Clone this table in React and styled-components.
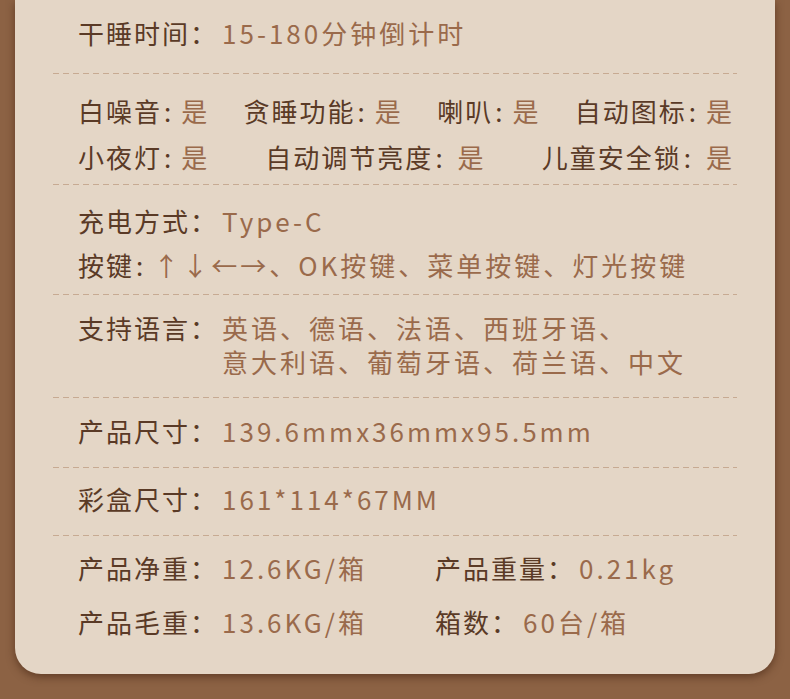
import React from 'react';
import styled, { createGlobalStyle } from 'styled-components';

const Global = createGlobalStyle`
  html, body { margin: 0; padding: 0; }
  body {
    background: #8c6244;
    font-family: "Noto Sans CJK SC", "Noto Sans", sans-serif;
  }
`;

const Page = styled.div`
  padding: 0 15px 25px;
`;

const Card = styled.div`
  background: #e4d6c6;
  border-radius: 0 0 26px 26px;
  box-shadow: 0 3px 9px rgba(60, 30, 12, 0.55);
`;

const Section = styled.div`
  padding: ${({ pt }) => pt}px 40px ${({ pb }) => pb}px 63px;
  display: flex;
  flex-direction: column;
  gap: ${({ gap }) => gap || 0}px;
`;

const Divider = styled.div`
  height: 1px;
  margin: 0 38px;
  background: repeating-linear-gradient(to right, #c7aa92 0 6px, transparent 6px 10px);
`;

const Row = styled.div`
  display: flex;
  align-items: flex-start;
  justify-content: ${({ spread }) => (spread ? 'space-between' : 'flex-start')};
  line-height: 34px;
  font-size: 26px;
  white-space: nowrap;
`;

const Item = styled.div`
  display: flex;
  align-items: flex-start;
`;

const Label = styled.span`
  color: #5a3a26;
  letter-spacing: 2px;
`;

const Colon = styled.span`
  color: #5a3a26;
  padding: ${({ wide }) => (wide ? '0 15px 0 2px' : '0 10px 0 2px')};
`;

const Value = styled.span`
  color: #9a6a4b;
  letter-spacing: 3px;
  margin-left: ${({ indent }) => indent || 0}px;
`;

const Lines = styled.div`
  display: flex;
  flex-direction: column;
`;

const Grid = styled.div`
  display: grid;
  grid-template-columns: 357px auto;
  row-gap: 20px;
`;

function Pair({ label, value, wide }) {
  return (
    <Item>
      <Label>{label}</Label>
      <Colon wide={wide}>:</Colon>
      <Value>{value}</Value>
    </Item>
  );
}

function Spec({ label, value }) {
  return (
    <Row>
      <Label>{label}：</Label>
      <Value indent={4}>{value}</Value>
    </Row>
  );
}

export default function App() {
  return (
    <>
      <Global />
      <Page>
        <Card>
          <Section pt={16} pb={23}>
            <Spec label="干睡时间" value="15-180分钟倒计时" />
          </Section>
          <Divider />

          <Section pt={20} pb={10} gap={12}>
            <Row spread>
              <Pair label="白噪音" value="是" />
              <Pair label="贪睡功能" value="是" />
              <Pair label="喇叭" value="是" />
              <Pair label="自动图标" value="是" />
            </Row>
            <Row spread>
              <Pair label="小夜灯" value="是" />
              <Pair label="自动调节亮度" value="是" wide />
              <Pair label="儿童安全锁" value="是" wide />
            </Row>
          </Section>
          <Divider />

          <Section pt={19} pb={12} gap={10}>
            <Spec label="充电方式" value="Type-C" />
            <Row>
              <Label>按键</Label>
              <Colon>:</Colon>
              <Value>↑↓←→、OK按键、菜单按键、灯光按键</Value>
            </Row>
          </Section>
          <Divider />

          <Section pt={16} pb={18}>
            <Row>
              <Label>支持语言：</Label>
              <Lines>
                <Value indent={4}>英语、德语、法语、西班牙语、</Value>
                <Value indent={4}>意大利语、葡萄牙语、荷兰语、中文</Value>
              </Lines>
            </Row>
          </Section>
          <Divider />

          <Section pt={16} pb={19}>
            <Spec label="产品尺寸" value="139.6mmx36mmx95.5mm" />
          </Section>
          <Divider />

          <Section pt={14} pb={19}>
            <Spec label="彩盒尺寸" value="161*114*67MM" />
          </Section>
          <Divider />

          <Section pt={15} pb={35}>
            <Grid>
              <Spec label="产品净重" value="12.6KG/箱" />
              <Spec label="产品重量" value="0.21kg" />
              <Spec label="产品毛重" value="13.6KG/箱" />
              <Spec label="箱数" value="60台/箱" />
            </Grid>
          </Section>
        </Card>
      </Page>
    </>
  );
}
